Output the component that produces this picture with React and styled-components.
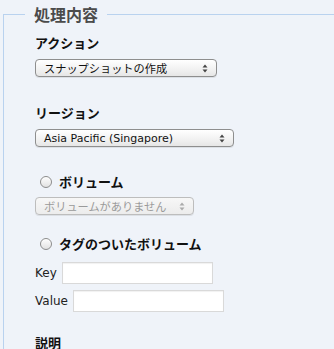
import React from "react";
import styled, { createGlobalStyle } from "styled-components";

const Global = createGlobalStyle`
  html, body { margin: 0; padding: 0; background: #eff3f9; }
  body { font-family: "DejaVu Sans", "Noto Sans CJK JP", sans-serif; overflow: hidden; }
`;

const Page = styled.div`
  width: 334px;
  height: 349px;
  overflow: hidden;
  padding: 4px 0 0 3px;
  box-sizing: border-box;
`;

const Fieldset = styled.fieldset`
  margin: 0;
  width: 400px;
  min-height: 400px;
  border: 1px solid #b9d2ef;
  border-right: none;
  border-bottom: none;
  padding: 10px 0 0 0;
  box-sizing: border-box;
`;

const Legend = styled.legend`
  margin-left: 21px;
  padding: 0 9px 0 9px;
  font-family: "Noto Sans CJK JP", sans-serif;
  font-size: 16px;
  line-height: 20px;
  font-weight: 700;
  color: #4b4b4b;
`;

const Body = styled.div`
  padding-left: 31px;
`;

const Section = styled.div`
  display: flex;
  flex-direction: column;
  align-items: flex-start;
  margin-bottom: ${(p) => p.$gap || 0}px;
`;

const Heading = styled.div`
  font-family: "Noto Sans CJK JP", sans-serif;
  font-size: 13px;
  line-height: 18px;
  font-weight: 700;
  color: #111;
  margin-bottom: 7px;
`;

const SelectBox = styled.div`
  width: ${(p) => p.$w}px;
  height: 18px;
  box-sizing: border-box;
  border: 1px solid ${(p) => (p.$disabled ? "#bdbdbd" : "#8e8e8e")};
  border-radius: 4px;
  background: ${(p) =>
    p.$disabled
      ? "linear-gradient(#f7f7f7, #ececec)"
      : "linear-gradient(#ffffff, #f1f1f1 60%, #e6e6e6)"};
  box-shadow: 0 1px 0 rgba(0,0,0,0.08);
  display: flex;
  align-items: center;
  justify-content: space-between;
  padding: 0 8px 0 8px;
  font-family: "DejaVu Sans", "Noto Sans CJK JP", sans-serif;
  font-size: ${(p) => p.$fs || 11.2}px;
  color: ${(p) => (p.$disabled ? "#9a9a9a" : "#111")};
  white-space: nowrap;
`;

const Arrows = ({ color }) => (
  <svg width="6" height="9" viewBox="0 0 6 9">
    <path d="M0.5 3.5 L3 0.5 L5.5 3.5 Z" fill={color} />
    <path d="M0.5 5.5 L3 8.5 L5.5 5.5 Z" fill={color} />
  </svg>
);

const RadioRow = styled.div`
  display: flex;
  align-items: center;
  gap: 7px;
  padding-left: 5px;
  margin-bottom: ${(p) => p.$mb}px;
`;

const Radio = styled.span`
  width: 12px;
  height: 12px;
  box-sizing: border-box;
  border-radius: 50%;
  border: 1px solid #8c8c8c;
  background: linear-gradient(#fdfdfd, #e2e2e2);
  box-shadow: inset 0 1px 1px rgba(255,255,255,0.8);
`;

const RadioLabel = styled.span`
  font-family: "Noto Sans CJK JP", sans-serif;
  font-size: 13px;
  line-height: 18px;
  font-weight: 700;
  color: #111;
`;

const InputRow = styled.div`
  display: flex;
  align-items: center;
  gap: 5px;
  margin-bottom: ${(p) => p.$mb}px;
`;

const InputLabel = styled.span`
  font-family: "DejaVu Sans", sans-serif;
  font-size: 12px;
  color: #222;
`;

const TextInput = styled.div`
  width: 151px;
  height: 22px;
  box-sizing: border-box;
  background: #fff;
  border: 1px solid #d9d9d9;
  box-shadow: inset 0 1px 1px rgba(0,0,0,0.06);
`;

export default function App() {
  return (
    <Page>
      <Global />
      <Fieldset>
        <Legend>処理内容</Legend>
        <Body>
          <Section $gap={27}>
            <Heading>アクション</Heading>
            <SelectBox $w={182}>
              <span>スナップショットの作成</span>
              <Arrows color="#444" />
            </SelectBox>
          </Section>
          <Section $gap={26}>
            <Heading>リージョン</Heading>
            <SelectBox $w={199} $fs={11}>
              <span>Asia Pacific (Singapore)</span>
              <Arrows color="#444" />
            </SelectBox>
          </Section>
          <Section $gap={20}>
            <RadioRow $mb={6}>
              <Radio />
              <RadioLabel>ボリューム</RadioLabel>
            </RadioRow>
            <SelectBox $w={159} $disabled>
              <span>ボリュームがありません</span>
              <Arrows color="#aaa" />
            </SelectBox>
          </Section>
          <Section $gap={22}>
            <RadioRow $mb={9}>
              <Radio />
              <RadioLabel>タグのついたボリューム</RadioLabel>
            </RadioRow>
            <InputRow $mb={6}>
              <InputLabel>Key</InputLabel>
              <TextInput />
            </InputRow>
            <InputRow $mb={0}>
              <InputLabel>Value</InputLabel>
              <TextInput />
            </InputRow>
          </Section>
          <Section>
            <Heading>説明</Heading>
          </Section>
        </Body>
      </Fieldset>
    </Page>
  );
}
